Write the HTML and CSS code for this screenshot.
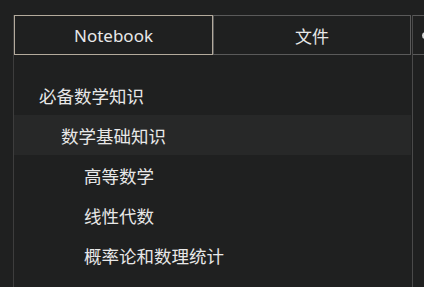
FILE: index.html
```html
<!DOCTYPE html>
<html>
<head>
<meta charset="utf-8">
<link rel="stylesheet" href="styles.css">
</head>
<body>
<div class="app">
  <div class="sidebar">
    <div class="tabs">
      <div class="tab active">Notebook</div>
      <div class="tab">文件</div>
    </div>
    <ul class="tree">
      <li class="row lvl1">必备数学知识</li>
      <li class="row lvl2 selected">数学基础知识</li>
      <li class="row lvl3">高等数学</li>
      <li class="row lvl3">线性代数</li>
      <li class="row lvl3">概率论和数理统计</li>
    </ul>
  </div>
  <div class="next">
    <div class="tab small"><span class="dot"></span></div>
  </div>
</div>
</body>
</html>
```
FILE: styles.css
```css
html, body {
  margin: 0;
  padding: 0;
  background: #1f2020;
  height: 100%;
  overflow: hidden;
}
.app {
  display: flex;
  padding: 15px 0 0 13px;
  height: 100%;
  box-sizing: border-box;
  font-family: "Noto Sans", "Noto Sans CJK SC", sans-serif;
  color: #e8e8e8;
}
.sidebar {
  width: 398px;
  border-left: 1px solid #3d3d3d;
  flex: none;
}
.tabs {
  display: flex;
  height: 40px;
}
.tab {
  box-sizing: border-box;
  height: 40px;
  display: flex;
  align-items: center;
  justify-content: center;
  font-size: 17px;
  border: 1px solid #5a5a5a;
  width: 198px;
}
.tab.active {
  border-color: #b3aa9c;
  width: 199px;
}
.tree {
  list-style: none;
  margin: 20px 0 0;
  padding: 0;
}
.row {
  height: 40px;
  display: flex;
  align-items: center;
  font-size: 17.5px;
  font-family: "Noto Sans CJK SC", sans-serif;
  white-space: nowrap;
  margin-right: 1px;
}
.lvl1 { padding-left: 25px; }
.lvl2 { padding-left: 47px; }
.lvl3 { padding-left: 70px; }
.selected { background: #272828; }
.next {
  flex: none;
  border-left: 1px solid #4a4a4a;
  width: 11px;
  overflow: hidden;
}
.tab.small {
  width: 11px;
  border-left: none;
  border-right: none;
  justify-content: flex-start;
  padding-left: 9px;
}
.dot {
  flex: none;
  width: 7px;
  height: 7px;
  border-radius: 50%;
  background: #d8d8d8;
}
```
